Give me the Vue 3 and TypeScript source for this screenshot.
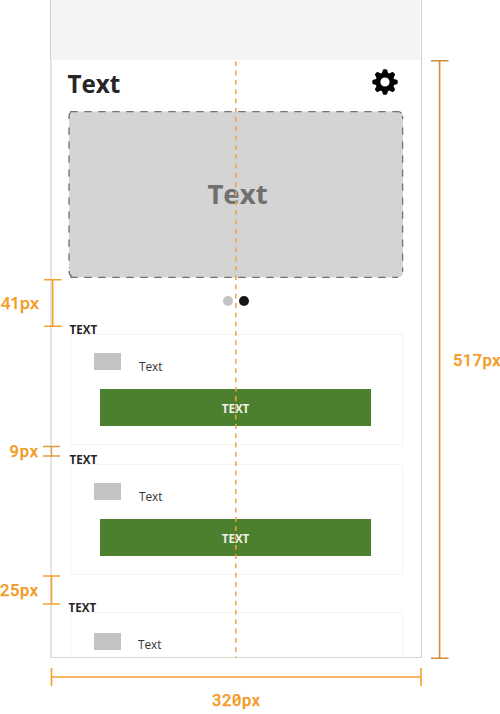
<script setup lang="ts">
interface Card {
  id: number
  variant: string
  action: boolean
}

interface Measure {
  label: string
  x: number
  y: number
  width: number
  family: string
}

const cards: Card[] = [
  { id: 1, variant: 'first', action: true },
  { id: 2, variant: 'second', action: true },
  { id: 3, variant: 'third', action: false },
]

const measures: Measure[] = [
  { label: '41px', x: 1, y: 309, width: 38, family: 'open' },
  { label: '9px', x: 9.5, y: 457, width: 28.5, family: 'roboto' },
  { label: '25px', x: 0, y: 596, width: 38, family: 'roboto' },
  { label: '320px', x: 212, y: 705.5, width: 48, family: 'roboto' },
  { label: '517px', x: 453, y: 365.5, width: 47.5, family: 'roboto' },
]

const teeth: number[] = [0, 45, 90, 135, 180, 225, 270, 315]
</script>

<template>
  <main class="board">
    <section class="phone">
      <div class="status"></div>
      <div class="screen">
        <header class="header">
          <h1 class="title">Text</h1>
          <svg class="gear" viewBox="-13 -13 26 26">
            <circle r="7" fill="none" stroke="#000" stroke-width="4.8" />
            <path
              v-for="angle in teeth"
              :key="angle"
              d="M-3.3-8 -2.2-11.7Q-2-12.7-1-12.7H1Q2-12.7 2.2-11.7L3.3-8Z"
              :transform="`rotate(${angle})`"
            />
          </svg>
        </header>
        <div class="hero">
          <svg class="outline" viewBox="0 0 336 168">
            <rect x="1" y="1.5" width="334" height="166" rx="5" class="fill" />
            <path d="M2.3 1.6H330" stroke-dasharray="7.4 6.6" />
            <path d="M334.6 17.5V162" stroke-dasharray="7.2 6.8" />
            <path d="M2.3 167.3H330" stroke-dasharray="7.4 6.6" />
            <path d="M1 17.5V158" stroke-dasharray="7.2 6.8" />
            <path d="M1 9V6Q1 3.5 3 2.2M1 161Q1 165 4 166.8M330 1.6Q332 1.6 333.4 3M334.6 6V9" />
          </svg>
          <span class="hero-text">Text</span>
        </div>
        <div class="dots"><i class="dot"></i><i class="dot active"></i></div>
        <article v-for="card in cards" :key="card.id" class="item" :class="card.variant">
          <h2 class="label">TEXT</h2>
          <div class="card">
            <div class="row">
              <span class="swatch"></span>
              <span class="copy">Text</span>
            </div>
            <button v-if="card.action" class="button" type="button">TEXT</button>
          </div>
        </article>
      </div>
    </section>

    <svg class="guides" viewBox="0 0 500 714">
      <path d="M235.8 61.3V658" class="center" />
      <path d="M44 279.7H61.5M44 326.2H61.5M52.7 280V326" />
      <path d="M43 446.5H60M43 456H60M51.5 446.5V456" class="fine" />
      <path d="M43 576H60M43 604H60M51.5 576V604" />
      <path d="M51.5 668V686M421 668V686M51.5 677H421" />
      <path d="M431 60.8H448.5M431 658.3H448.5M439.6 61V658" class="dark" />
      <path d="M233.7 703L238.6 697" class="slash" />
      <text
        v-for="m in measures"
        :key="m.label"
        :x="m.x"
        :y="m.y"
        :textLength="m.width"
        :class="m.family"
      >{{ m.label }}</text>
    </svg>
  </main>
</template>

<style>
body {
  margin: 0;
  background: #fff;
}
</style>

<style scoped>
.board {
  position: relative;
  width: 500px;
  height: 714px;
  overflow: hidden;
  font-family: "Open Sans", "Noto Sans", sans-serif;
  color: #262626;
}
.phone {
  width: 371px;
  height: 658px;
  margin-left: 50px;
  border-right: 1px solid #cfcfcf;
}
.status {
  box-sizing: border-box;
  height: 60px;
  margin-right: 1px;
  border-left: 1px solid #d0d0d0;
  background: #f4f4f4;
  background-clip: padding-box;
}
.screen {
  box-sizing: border-box;
  width: 371px;
  height: 598px;
  overflow: hidden;
  border-left: 2px solid #e4e4e4;
  border-bottom: 1px solid #d8d8d8;
}
.header {
  display: flex;
  justify-content: space-between;
  align-items: flex-start;
  height: 50px;
  padding: 0 23px 0 15.5px;
}
.title {
  margin: 7px 0 0;
  font-size: 24.2px;
  line-height: 34px;
  font-weight: 700;
}
.gear {
  width: 26px;
  height: 26px;
  margin-top: 9px;
}
.hero {
  display: grid;
  place-items: center;
  width: 336px;
  height: 168px;
  margin-left: 16px;
}
.hero > * {
  grid-area: 1 / 1;
}
.outline {
  width: 336px;
  height: 168px;
  fill: none;
  stroke: #727272;
  stroke-width: 1.3;
}
.outline .fill {
  fill: #d4d4d4;
  stroke: none;
}
.hero-text {
  padding: 0 0 3px 3px;
  font-size: 27.6px;
  font-weight: 700;
  line-height: 38px;
  color: #707070;
}
.dots {
  display: flex;
  gap: 6px;
  height: 10px;
  padding: 18px 0 0 171.4px;
}
.dot {
  width: 10px;
  height: 10px;
  border-radius: 50%;
  background: #c4c4c4;
}
.dot.active {
  background: #15171a;
}
.item {
  margin-left: 17px;
}
.first {
  padding-top: 15px;
}
.second {
  padding-top: 6px;
}
.third {
  padding-top: 24px;
}
.label {
  height: 13px;
  margin: 0;
  padding-left: 0.5px;
  font-size: 11.6px;
  line-height: 18px;
  font-weight: 700;
}
.card {
  box-sizing: border-box;
  width: 333px;
  height: 111px;
  margin-left: 1px;
  border: 1px solid #f4f4f4;
}
.row {
  display: flex;
  height: 54px;
  padding-left: 23px;
}
.swatch {
  width: 27px;
  height: 17px;
  margin-top: 18px;
  background: #c3c3c3;
}
.copy {
  margin: 22px 0 0 18px;
  font-size: 11.8px;
  line-height: 18px;
  color: #333;
}
.third .label {
  margin-left: -1px;
}
.third .copy {
  margin-left: 17px;
}
.third .swatch {
  margin-top: 20px;
}
.button {
  display: block;
  width: 271px;
  height: 37px;
  margin-left: 29px;
  padding: 1px 0 0;
  border: 0;
  font: 700 11.6px/37px "Open Sans", sans-serif;
  color: #eef2ea;
  background: #4c802e;
}
.guides {
  position: absolute;
  inset: 0;
  width: 500px;
  height: 714px;
  fill: none;
  stroke: #f6a02e;
  stroke-width: 1.6;
}
.guides .center {
  stroke: #f2a343;
  stroke-width: 1.5;
  stroke-dasharray: 4.8 4.5;
}
.guides .fine {
  stroke: #df9a43;
  stroke-width: 1.3;
}
.guides .dark {
  stroke: #d28d3a;
}
.guides .slash {
  stroke: #f39b22;
  stroke-width: 1.3;
}
.guides text {
  stroke: #f39b22;
  stroke-width: 0.25;
  fill: #f39b22;
}
.guides .open {
  font: 600 16.5px "Open Sans", sans-serif;
}
.guides .roboto {
  font: 500 16.5px Roboto, sans-serif;
}
</style>
